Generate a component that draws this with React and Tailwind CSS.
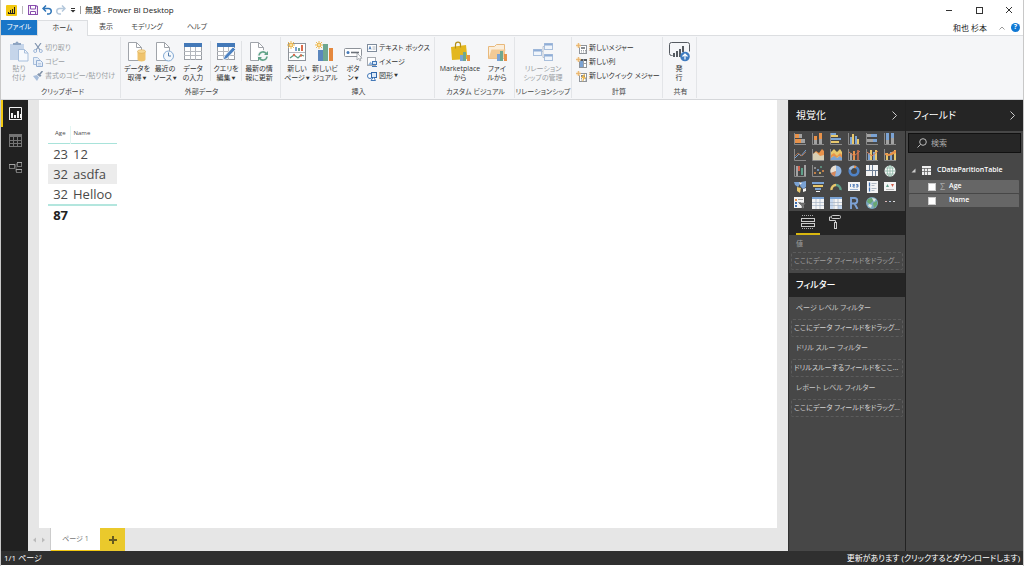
import React from "react";

const B = "#7ba3d4";
const O = "#e8924a";
const Y = "#e8c86c";
const G = "#a3a3a3";
const W = "#f4f4f4";
const D = "#3f6fb0";

function Svg({ w = 12, h = 12, className = "", children }) {
  return (
    <svg width={w} height={h} viewBox={`0 0 ${w} ${h}`} fill="none" className={`shrink-0 ${className}`} aria-hidden="true">
      {children}
    </svg>
  );
}

function Rects({ list }) {
  return list.map(([x, y, w, h, c], i) => <rect key={i} x={x} y={y} width={w} height={h} fill={c} />);
}

const Axis = () => <path d="M.5 0v11.5H12" stroke="#8a8a8a" />;

/* ---------- ribbon icons ---------- */

const Page = ({ x = 1 }) => (
  <g>
    <path d={`M${x + 0.5} 1.5h8l5 5v13h-13z`} fill="#fff" stroke="#a0a4aa" />
    <path d={`M${x + 8.5} 1.5v5h5`} stroke="#a0a4aa" />
  </g>
);

const TableShape = () => (
  <g>
    <rect x="1.5" y="3.500" width="17" height="15" fill="#fff" stroke="#9a9ea4" />
    <rect x="1" y="2" width="18" height="4" fill="#4479b8" />
    <path d="M1 10.500h18M1 14.500h18M7.500 6v13M12.500 6v13" stroke="#b4b8be" />
  </g>
);

const Spark = () => (
  <g stroke="#eeb94f">
    <path d="M4 0v8M0 4h8M1 1l6 6M7 1l-6 6" />
    <circle cx="4" cy="4" r="1.500" fill="#fff2c8" />
  </g>
);

const PasteIcon = () => (
  <Svg w={20} h={21}>
    <rect x="1" y="3" width="14" height="16" fill="#c5d5ea" />
    <path d="M4 4V2h2.500a1.500 1.500 0 0 1 3 0H12v2z" fill="#8fa5c2" />
    <path d="M9.500 8.500h6l3.500 3.500v8H9.500z" fill="#f6f9fd" stroke="#a8bfdc" />
    <path d="M15.500 8.500V12H19" stroke="#a8bfdc" />
  </Svg>
);
const GetDataIcon = () => (
  <Svg w={20} h={21}>
    <Page />
    <path d="M10.500 10.500v8c0 2.500 8 2.500 8 0v-8" fill="#efc36d" />
    <ellipse cx="14.500" cy="10.500" rx="4" ry="1.800" fill="#f6d896" stroke="#dba94c" strokeWidth=".6" />
  </Svg>
);
const RecentIcon = () => (
  <Svg w={20} h={21}>
    <Page />
    <circle cx="13.500" cy="15" r="5" fill="#f4f8fc" stroke="#84aad4" />
    <path d="M13.500 11.500V15H16" stroke="#557fae" />
  </Svg>
);
const EnterDataIcon = () => <Svg w={20} h={21}><TableShape /></Svg>;
const EditQueryIcon = () => (
  <Svg w={20} h={21}>
    <TableShape />
    <path d="M7 19l1.500-4L17 6l2.500 2.500-8.500 9z" fill="#4c82c2" stroke="#f5f6f8" strokeWidth=".8" />
  </Svg>
);
const RefreshIcon = () => (
  <Svg w={20} h={21}>
    <Page />
    <circle cx="14" cy="15" r="6" fill="#f5f6f8" />
    <path d="M10 14.500a4 4 0 0 1 7.500-1.500M18 15.500a4 4 0 0 1-7.500 1.500" stroke="#61a389" strokeWidth="1.600" />
    <path d="M19 10v4h-4zM9 20v-4h4z" fill="#61a389" />
  </Svg>
);
const NewPageIcon = () => (
  <Svg w={20} h={21}>
    <rect x="1.500" y="2.500" width="17" height="17" fill="#fff" stroke="#8d9299" />
    <Rects list={[[8, 6, 2, 4, B], [11, 7, 2, 3, "#6ba58f"], [14, 4, 2, 6, "#d96d4d"], [2, 11, 16, 1, "#b7bbc1"]]} />
    <path d="M3 17l4-3 4 3 3-3 3 1" stroke="#5a9d86" strokeWidth="1.300" />
    <circle cx="7" cy="14" r="1.200" fill="#d96d4d" />
    <circle cx="14" cy="14.500" r="1.200" fill="#d96d4d" />
    <Spark />
  </Svg>
);
const NewVisualIcon = () => (
  <Svg w={20} h={21}>
    <Rects list={[[3, 9, 5, 11, "#5b86bd"], [8, 3, 5, 17, "#6fa78f"], [14, 7, 4, 13, "#e5883e"]]} />
    <Spark />
  </Svg>
);
const ButtonIcon = () => (
  <Svg w={20} h={21}>
    <rect x="1.500" y="7.500" width="17" height="8" rx="1" fill="#fff" stroke="#8d9299" />
    <circle cx="5" cy="11.500" r="1.500" fill="#4479b8" />
    <path d="M8 11.500h8" stroke="#6c7279" strokeWidth="1.600" />
    <path d="M14 12v7l1.700-1.500 1.200 2.500 1-.5-1-2.300H19z" fill="#fff" stroke="#8d9299" strokeWidth=".7" />
  </Svg>
);
const MarketIcon = () => (
  <Svg w={20} h={21}>
    <path d="M1 6l15-2 1.500 14L2 19z" fill="#e3b71f" />
    <path d="M5.500 7.500V3.500c0-3.300 5-3.300 5 0v3" stroke="#b48f17" strokeWidth="1.200" />
    <Rects list={[[10, 14, 3, 6, B], [13, 11, 3, 9, "#6fa78f"], [17, 14, 3, 6, O]]} />
  </Svg>
);
const FolderIcon = () => (
  <Svg w={20} h={21}>
    <path d="M1.500 17.500v-12h6l2-2h8v14z" fill="#fbeedb" stroke="#e8b97c" />
    <path d="M1.500 17.500l3-9h14l-2 9z" fill="#f3ca95" />
    <Rects list={[[10, 13, 3, 7, B], [13, 10, 3, 10, "#6fa78f"], [17, 13, 3, 7, O]]} />
  </Svg>
);
const RelationIcon = () => (
  <Svg w={20} h={21}>
    <path d="M7 10.500h3v-5h3M10 10.500v6h3" stroke="#b9c3d1" />
    {[[0.5, 8.5], [11.5, 2.5], [11.5, 13.5]].map(([x, y]) => (
      <g key={y}>
        <rect x={x} y={y} width="8" height="6" fill="#f0f5fb" stroke="#a9bfdc" />
        <rect x={x} y={y} width="8" height="2" fill="#8fadd6" />
      </g>
    ))}
  </Svg>
);
const PublishIcon = () => (
  <Svg w={21} h={21}>
    <path d="M3.500 14.500h-1a2 2 0 0 1-2-2v-9a2 2 0 0 1 2-2h16a2 2 0 0 1 2 2v7" stroke="#555a60" />
    <Rects list={[[4, 12, 2, 4, "#555a60"], [7, 10, 2, 6, "#555a60"], [10, 8, 2, 8, "#555a60"], [13, 5, 2, 6, "#555a60"]]} />
    <circle cx="16" cy="15.500" r="4.800" fill="#3f7cc0" />
    <path d="M16 18.500v-5.500M13.500 15.500L16 13l2.500 2.500" stroke="#fff" strokeWidth="1.200" />
  </Svg>
);

const CutIcon = () => (
  <Svg w={10} h={10}>
    <path d="M2 0l5 7M8 0L3 7" stroke="#8195b0" strokeWidth="1.200" />
    <circle cx="2.200" cy="8" r="1.500" stroke="#9db6d8" />
    <circle cx="7.800" cy="8" r="1.500" stroke="#9db6d8" />
  </Svg>
);
const CopyIcon = () => (
  <Svg w={10} h={10}>
    <path d="M.5.5h4l2 2v5h-6z" fill="#e6eef8" stroke="#a9bfdc" />
    <path d="M3.500 3.500h4l2 2v4h-6z" fill="#e6eef8" stroke="#94aed2" />
    <path d="M5 6.500h3M5 8h3" stroke="#a9bfdc" strokeWidth=".7" />
  </Svg>
);
const BrushIcon = () => (
  <Svg w={10} h={10}>
    <path d="M0 5l4-1 2 2.500L4 10z" fill="#a7bddb" />
    <path d="M4 3.500L7 6l1.500-1.500L6 2z" fill="#8194ad" />
    <path d="M7 3l2.500-3" stroke="#7f90a6" strokeWidth="1.500" />
  </Svg>
);
const TextBoxIcon = () => (
  <Svg w={10} h={10}>
    <rect x=".5" y="1.500" width="9" height="7" fill="#fff" stroke="#7f8c9c" />
    <path d="M2 6.500l1-3 1 3M2.300 5.500h1.500" stroke="#3f75b5" strokeWidth=".8" />
    <path d="M5.500 4h3M5.500 6h3" stroke="#9aa1a9" strokeWidth=".8" />
  </Svg>
);
const ImageIcon = () => (
  <Svg w={10} h={10}>
    <rect x=".5" y=".5" width="8" height="8" fill="#fff" stroke="#a6aab0" />
    <path d="M1 8l2.500-3.500L6 8z" fill="#8fb2da" />
    <rect x="5.500" y="4.500" width="4" height="3" fill="#dce9f7" stroke="#4479b8" />
    <path d="M5 9.500h5" stroke="#4479b8" />
  </Svg>
);
const ShapesIcon = () => (
  <Svg w={10} h={10}>
    <circle cx="3" cy="5" r="2.500" stroke="#4479b8" fill="#fff" />
    <rect x="4.500" y="1.500" width="5" height="5" stroke="#2f67ab" fill="#dce9f7" />
    <path d="M4 9.500h4.500L6.500 6z" stroke="#4479b8" fill="#fff" />
  </Svg>
);
const CalcIcon = ({ kind }) => (
  <Svg w={11} h={11}>
    <rect x="3.500" y="2.500" width="7" height="8" fill="#fff" stroke="#8f949a" />
    {kind === "column" ? (
      <g>
        <rect x="3" y="2" width="8" height="2" fill="#55595f" />
        <path d="M7.500 2v8M4 6.500h6" stroke="#9a9fa5" />
        <rect x="4" y="4" width="3" height="6" fill="#7ba3d4" />
      </g>
    ) : (
      <g>
        <rect x="5" y="4" width="4" height="2" fill="#888d93" />
        <path d="M5 7.500h5M5 9h5" stroke="#a0a4aa" strokeDasharray="1 1" />
      </g>
    )}
    {kind === "quick" && <path d="M8 3L5 7h2l-1 4 4-5H8l1-3z" fill="#eeb94f" />}
    <circle cx="2.500" cy="2.500" r="2.300" fill="#f5d9ae" />
    <path d="M2.500 0v5M0 2.500h5" stroke="#e8b36a" strokeWidth=".8" />
  </Svg>
);

/* ---------- ribbon pieces ---------- */

const Caret = () => <span className="ml-px text-[4px] align-middle text-[#333]">▼</span>;

function BigButton({ icon, lines, caret, width = "w-7", muted }) {
  return (
    <button type="button" className={`flex shrink-0 flex-col items-center ${width} ${muted ? "text-[#9a9ea3]" : "text-[#333]"}`}>
      {icon}
      <span className="mt-[2px] flex flex-col items-center text-[7px] leading-[9px] whitespace-nowrap">
        <span>{lines[0]}</span>
        <span>{lines[1]}{caret && <Caret />}</span>
      </span>
    </button>
  );
}

function SmallButton({ icon, label, caret, muted }) {
  return (
    <button type="button" className={`flex h-[14px] items-center gap-[2px] text-[7px] whitespace-nowrap ${muted ? "text-[#9a9ea3]" : "text-[#333]"}`}>
      {icon}
      <span>{label}{caret && <Caret />}</span>
    </button>
  );
}

function Group({ label, width, children }) {
  return (
    <section className={`flex shrink-0 flex-col border-r border-[#e3e5e8] ${width}`}>
      <div className="flex h-[50px] items-start pt-1">{children}</div>
      <h2 className="text-center text-[7px] leading-[10px] whitespace-nowrap text-[#444]">{label}</h2>
    </section>
  );
}

const Sep = () => <span className="mx-[3px] h-10 w-px shrink-0 bg-[#e0e2e5]" />;

function Ribbon() {
  return (
    <div className="flex h-16 overflow-hidden border-b border-[#d5d7da] bg-[#f5f6f8] py-px">
      <Group label="クリップボード" width="w-[120px] pl-1">
        <BigButton icon={<PasteIcon />} lines={["貼り", "付け"]} muted />
        <div className="flex flex-col">
          <SmallButton icon={<CutIcon />} label="切り取り" muted />
          <SmallButton icon={<CopyIcon />} label="コピー" muted />
          <SmallButton icon={<BrushIcon />} label="書式のコピー/貼り付け" muted />
        </div>
      </Group>
      <Group label="外部データ" width="w-[160px] pl-[2px]">
        <BigButton icon={<GetDataIcon />} lines={["データを", "取得"]} caret />
        <BigButton icon={<RecentIcon />} lines={["最近の", "ソース"]} caret />
        <BigButton icon={<EnterDataIcon />} lines={["データ", "の入力"]} />
        <Sep />
        <BigButton icon={<EditQueryIcon />} lines={["クエリを", "編集"]} caret width="w-6" />
        <Sep />
        <BigButton icon={<RefreshIcon />} lines={["最新の情", "報に更新"]} />
      </Group>
      <Group label="挿入" width="w-[154px] pl-[2px]">
        <BigButton icon={<NewPageIcon />} lines={["新しい", "ページ"]} caret />
        <BigButton icon={<NewVisualIcon />} lines={["新しいビ", "ジュアル"]} />
        <BigButton icon={<ButtonIcon />} lines={["ボタ", "ン"]} caret />
        <div className="flex flex-col">
          <SmallButton icon={<TextBoxIcon />} label="テキスト ボックス" />
          <SmallButton icon={<ImageIcon />} label="イメージ" />
          <SmallButton icon={<ShapesIcon />} label="図形" caret />
        </div>
      </Group>
      <Group label="カスタム ビジュアル" width="w-[80px] pl-[2px]">
        <BigButton icon={<MarketIcon />} lines={["Marketplace", "から"]} width="w-[46px]" />
        <BigButton icon={<FolderIcon />} lines={["ファイ", "ルから"]} />
      </Group>
      <Group label="リレーションシップ" width="w-[57px]">
        <BigButton icon={<RelationIcon />} lines={["リレーション", "シップの管理"]} width="w-[56px]" muted />
      </Group>
      <Group label="計算" width="w-[91px] pl-[4px]">
        <div className="flex flex-col">
          <SmallButton icon={<CalcIcon />} label="新しいメジャー" />
          <SmallButton icon={<CalcIcon kind="column" />} label="新しい列" />
          <SmallButton icon={<CalcIcon kind="quick" />} label="新しいクイック メジャー" />
        </div>
      </Group>
      <Group label="共有" width="w-[34px] pl-[2px]">
        <BigButton icon={<PublishIcon />} lines={["発", "行"]} />
      </Group>
    </div>
  );
}

/* ---------- title bar ---------- */

function TitleBar() {
  return (
    <header className="flex h-5 items-center bg-white pr-[10px] pl-[5px] text-[8px] text-[#222]">
      <Svg w={11} h={11}>
        <rect width="11" height="11" rx="1" fill="#f2c811" />
        <Rects list={[[2, 7, 1, 2, "#222"], [4, 5, 1, 4, "#222"], [6, 4, 1, 5, "#222"], [8, 2, 1, 7, "#222"], [2, 8, 7, 1, "#222"]]} />
      </Svg>
      <span className="mx-[5px] h-2 w-px bg-[#bbb]" />
      <button type="button" aria-label="上書き保存">
        <Svg w={10} h={10}>
          <path d="M.5.500h7l2 1v8h-9z" stroke="#8a4fae" strokeWidth="1.200" fill="#fff" />
          <path d="M2.500 1v3h5V1M2.500 9.500v-3h5v3" stroke="#8a4fae" />
        </Svg>
      </button>
      <button type="button" aria-label="元に戻す" className="ml-[4px]">
        <Svg w={10} h={10}>
          <path d="M1 3.500h5.500a2.500 2.500 0 0 1 0 5.500H5M4 .5l-3 3 3 3" stroke="#2f75b8" strokeWidth="1.500" />
        </Svg>
      </button>
      <button type="button" aria-label="やり直し" className="ml-[4px]">
        <Svg w={10} h={10}>
          <path d="M9 3.500H3.500a2.500 2.500 0 0 0 0 5.500H5M6 .5l3 3-3 3" stroke="#b4c8dc" strokeWidth="1.500" />
        </Svg>
      </button>
      <button type="button" aria-label="カスタマイズ" className="ml-[4px]">
        <Svg w={6} h={6}><path d="M1 1.500h4" stroke="#333" /><path d="M.5 3h5L3 5.500z" fill="#333" /></Svg>
      </button>
      <span className="mx-[4px] h-2 w-px bg-[#999]" />
      <h1 className="whitespace-nowrap">無題 - Power BI Desktop</h1>
      <div className="ml-auto flex items-center gap-[22px]">
        <button type="button" aria-label="最小化"><Svg w={8} h={8}><path d="M1 4.500h6" stroke="#333" /></Svg></button>
        <button type="button" aria-label="最大化"><Svg w={8} h={8}><rect x="1.500" y="1.500" width="6" height="6" stroke="#333" /></Svg></button>
        <button type="button" aria-label="閉じる"><Svg w={8} h={8}><path d="M1 1l6 6M7 1L1 7" stroke="#333" /></Svg></button>
      </div>
    </header>
  );
}

function MenuTabs() {
  return (
    <nav className="flex h-4 items-stretch border-b border-[#dcdee1] bg-white text-[7px] text-[#444]">
      <button type="button" className="w-9 bg-[#1976c8] text-white">ファイル</button>
      <button type="button" className="-mb-px w-[51px] border-x border-t border-[#dcdee1] bg-[#f5f6f8] text-[#333]">ホーム</button>
      <button type="button" className="w-[36px]">表示</button>
      <button type="button" className="w-[46px]">モデリング</button>
      <button type="button" className="w-[54px]">ヘルプ</button>
      <div className="ml-auto flex items-center gap-[12px] pr-[3px] text-[8px]">
        <span className="text-[#222]">和也 杉本</span>
        <div className="flex items-center gap-[6px]">
          <button type="button" aria-label="リボンを折りたたむ"><Svg w={6} h={6}><path d="M.5 4.500L3 2l2.500 2.500" stroke="#999" /></Svg></button>
          <button type="button" aria-label="ヘルプを表示" className="flex h-[9px] w-[9px] items-center justify-center rounded-full bg-[#0f78d4] text-[7px] font-bold text-white">?</button>
        </div>
      </div>
    </nav>
  );
}

/* ---------- canvas ---------- */

function Rail() {
  return (
    <nav className="flex w-[27px] shrink-0 flex-col bg-[#212121]">
      <button type="button" aria-label="レポート" className="flex h-[27px] items-center justify-center border-l-2 border-[#f2c811]">
        <Svg w={13} h={13}>
          <path d="M.5 12V.5h12V12M0 12.500h13" stroke="#f2f2f2" />
          <Rects list={[[2, 6, 2, 5, W], [5, 8, 2, 3, W], [8, 4, 2, 7, W], [11, 7, 1, 4, W]]} />
        </Svg>
      </button>
      <button type="button" aria-label="データ" className="flex h-[27px] items-center justify-center border-l-2 border-transparent">
        <Svg w={13} h={13}>
          <rect x=".5" y=".5" width="12" height="12" stroke="#757575" />
          <rect width="13" height="3" fill="#757575" />
          <path d="M0 6.500h13M0 9.500h13M4.500 3v10M8.500 3v10" stroke="#757575" />
        </Svg>
      </button>
      <button type="button" aria-label="リレーションシップ" className="flex h-[27px] items-center justify-center border-l-2 border-transparent">
        <Svg w={13} h={13}>
          <path d="M5.500 5h1.500v5.500h1M7 5V3h1.500" stroke="#757575" />
          <rect x=".5" y="3.500" width="5" height="4" stroke="#757575" />
          <rect x="8.500" y="1.500" width="4" height="4" stroke="#757575" />
          <rect x="7.500" y="8.500" width="5" height="3" stroke="#757575" />
          <path d="M0 3.500h6M8 1.500h5M7 8.500h6" stroke="#a5a5a5" />
        </Svg>
      </button>
    </nav>
  );
}

const rows = [
  { age: 23, name: "12" },
  { age: 32, name: "asdfa", shaded: true },
  { age: 32, name: "Helloo" },
];

function DataTable() {
  return (
    <table className="w-[69px] border-collapse text-[13px] leading-[20px] text-[#4a4a4a]">
      <thead>
        <tr className="h-[17px] border-b border-[#a8e3da] text-[6px] leading-[8px]">
          <th className="w-[22px] border-r border-[#e3f6f3] pt-px pr-1 pb-[4px] text-right font-normal">Age</th>
          <th className="pt-px pb-[4px] pl-[3px] text-left font-normal">Name</th>
        </tr>
      </thead>
      <tbody>
        <tr aria-hidden="true" className="h-px" />
        {rows.map((r, i) => (
          <tr key={i} className={`h-5 ${r.shaded ? "bg-[#ececec]" : ""}`}>
            <td className="p-0 pr-[2px] text-right">{r.age}</td>
            <td className="p-0 pl-[3px]">{r.name}</td>
          </tr>
        ))}
      </tbody>
      <tfoot>
        <tr className="border-t-2 border-[#b3e6de] leading-[18px] text-[#222]">
          <td className="p-0 pr-[2px] text-right font-bold">87</td>
          <td />
        </tr>
      </tfoot>
    </table>
  );
}

function Canvas() {
  return (
    <main className="flex min-w-0 flex-1 flex-col bg-[#e6e6e6]">
      <div className="mr-[11px] ml-[11px] flex-1 bg-white pt-[26px] pl-[9px]">
        <DataTable />
      </div>
      <div className="flex h-[23px] items-stretch text-[8px]">
        <div className="flex w-[23px] items-center justify-center gap-1 border-r border-[#ccc]">
          <button type="button" aria-label="前のページ"><Svg w={5} h={6}><path d="M4 .5v5L1 3z" fill="#bbb" /></Svg></button>
          <button type="button" aria-label="次のページ"><Svg w={5} h={6}><path d="M1 .5v5L4 3z" fill="#bbb" /></Svg></button>
        </div>
        <button type="button" className="w-[49px] border-b border-[#f2c811] bg-white text-[7px] text-[#777]">ページ 1</button>
        <button type="button" aria-label="ページの追加" className="flex w-[25px] items-center justify-center bg-[#eac92c]">
          <Svg w={8} h={8}><path d="M4 0v8M0 4h8" stroke="#665a20" strokeWidth="2" /></Svg>
        </button>
      </div>
    </main>
  );
}

/* ---------- visual gallery ---------- */

const visuals = [
  ["積み上げ横棒", <g key="i"><Axis /><Rects list={[[1, 1, 4, 4, O], [5, 1, 3, 4, G], [1, 6, 6, 4, O], [7, 6, 4, 4, G]]} /></g>],
  ["積み上げ縦棒", <g key="i"><Axis /><Rects list={[[2, 3, 3, 4, O], [2, 7, 3, 4, G], [7, 0, 3, 6, O], [7, 6, 3, 5, G]]} /></g>],
  ["集合横棒", <g key="i"><Axis /><Rects list={[[1, 0, 5, 2, B], [1, 2, 7, 2, Y], [1, 5, 10, 2, B], [1, 8, 8, 2, Y]]} /></g>],
  ["集合縦棒", <g key="i"><Axis /><Rects list={[[2, 4, 2, 7, B], [4, 1, 2, 10, Y], [7, 3, 2, 8, B], [9, 6, 2, 5, Y]]} /></g>],
  ["100% 積み上げ横棒", <g key="i"><Axis /><Rects list={[[1, 1, 4, 3, G], [5, 1, 6, 3, B], [1, 6, 6, 3, G], [7, 6, 4, 3, B]]} /></g>],
  ["100% 積み上げ縦棒", <g key="i"><Axis /><Rects list={[[2, 0, 3, 7, B], [2, 7, 3, 4, G], [7, 0, 3, 5, B], [7, 5, 3, 6, G]]} /></g>],
  ["折れ線", <g key="i"><Axis /><path d="M1 9l4-4 2 2 5-6" stroke={B} /><path d="M1 7l3-3 4 3 4-4" stroke="#a5714f" /></g>],
  ["面", <g key="i"><Axis /><path d="M1 11V5l3-3 3 2 3-4 2 2v9z" fill={O} /><path d="M1 11V5l3-2 4 4 4-1v5z" fill="#d8cfb4" /></g>],
  ["積み上げ面", <g key="i"><Axis /><path d="M1 11V3l3-3 3 3 3-3 2 3v8z" fill={Y} /><path d="M1 6l3-2 3 3 3-3 2 2v3l-3-2-3 2-3-2-2 2z" fill={O} /><path d="M1 11V9l3-2 3 2 3-2 2 2v2z" fill={B} /></g>],
  ["折れ線と積み上げ縦棒", <g key="i"><Axis /><Rects list={[[2, 4, 2, 7, G], [5, 2, 2, 9, O], [9, 1, 2, 10, "#b3684b"]]} /><path d="M1 3l5 4 6-5" stroke="#d97a4f" /></g>],
  ["折れ線と集合縦棒", <g key="i"><Axis /><Rects list={[[2, 4, 2, 7, B], [4, 1, 2, 10, Y], [7, 3, 2, 8, B], [9, 1, 2, 10, Y]]} /><path d="M1 3l5 4 6-5" stroke="#d97a4f" /></g>],
  ["リボン", <g key="i"><Axis /><Rects list={[[2, 4, 2, 7, Y], [6, 3, 2, 8, B], [10, 1, 2, 10, Y]]} /><path d="M1 4l4 1 3-2 4-2v3L8 6 5 7 1 6z" fill={O} /></g>],
  ["ウォーターフォール", <g key="i"><Axis /><Rects list={[[2, 1, 2, 10, G], [4, 1, 2, 5, "#cf5f4b"], [7, 3, 2, 7, "#5fa08a"], [10, 0, 2, 11, G]]} /></g>],
  ["散布図", <g key="i"><Axis /><circle cx="3" cy="8" r="1" fill={O} /><circle cx="6" cy="5" r="1" fill={B} /><circle cx="9" cy="2" r="1" fill="#5fa08a" /><circle cx="8" cy="8" r="1" fill={Y} /><circle cx="3" cy="3" r="1" fill={G} /><circle cx="11" cy="6" r="1" fill={O} /></g>],
  ["円", <g key="i"><circle cx="6" cy="6" r="5.500" fill="#8fb3de" /><path d="M6 6V.5A5.500 5.500 0 0 0 .8 8z" fill="#eadfd0" /><path d="M6 6L.8 8A5.500 5.500 0 0 0 5 11.400z" fill="#d88758" /></g>],
  ["ドーナツ", <g key="i"><circle cx="6" cy="6" r="4.300" stroke="#4f83c8" strokeWidth="2.600" /><path d="M2 4.500A4.300 4.300 0 0 1 6 1.700" stroke="#a9bfd9" strokeWidth="2.600" /><path d="M6 1.700A4.300 4.300 0 0 1 8 2.200" stroke={O} strokeWidth="2.600" /></g>],
  ["ツリーマップ", <g key="i"><rect width="12" height="11" fill={W} /><path d="M6.500 0v11M0 5.500h12M9.500 5v6M3.500 0v5" stroke="#6d7f95" /></g>],
  ["マップ", <g key="i"><circle cx="6" cy="6" r="5.500" fill="#f4f8f6" /><path d="M6 .5v11M.5 6h11M2 3h8M2 9h8" stroke="#7faf9c" strokeWidth=".7" /><ellipse cx="6" cy="6" rx="2.800" ry="5.500" stroke="#7faf9c" strokeWidth=".7" /></g>],
  ["塗り分け地図", <g key="i"><path d="M0 1h5l1 2-2 3-3-2zM7 1l5-1v6l-3 2-3-3z" fill={B} /><path d="M3 6l4 1-1 5-3-2z" fill={Y} /><path d="M9 8l3-1v3l-3 1zM5 1l3 1-2 2z" fill={W} /></g>],
  ["じょうご", <g key="i"><Rects list={[[0, 1, 12, 2, B], [1, 4, 10, 2, Y], [3, 7, 6, 2, B], [4, 10, 4, 1, W]]} /></g>],
  ["ゲージ", <g key="i"><path d="M1.500 9a4.500 4.500 0 0 1 4.500-5" stroke={Y} strokeWidth="2.400" /><path d="M6 4a4.500 4.500 0 0 1 4.500 5" stroke="#5fa08a" strokeWidth="2.400" /></g>],
  ["カード", <g key="i"><rect y="1" width="12" height="9" fill={W} /><path d="M2.500 3v3M4.500 3.500h2v1h-1.500v1.500h2M8 3.500h2v2.500H8M8.500 4.700H10" stroke={D} strokeWidth=".8" /><path d="M2 8.500h8" stroke="#9bb4d6" /></g>],
  ["複数の行カード", <g key="i"><rect x="1" width="11" height="12" fill={W} /><path d="M3.500 1.500v4M3.500 6.500v4" stroke={D} strokeWidth="1.300" /><path d="M5.500 2.500h5M5.500 4.500h3M5.500 7.500h5M5.500 9.500h3" stroke="#b1bac5" /></g>],
  ["KPI", <g key="i"><rect y="1" width="12" height="9" fill={W} /><path d="M2 6l1.500-3L5 6z" fill="#5fa08a" /><path d="M7 3h3L8.500 6z" fill="#cf5f4b" /><path d="M2 8.500h8" stroke="#bbb" /></g>],
  ["スライサー", <g key="i"><rect width="10" height="11" fill={W} /><Rects list={[[1, 2, 2, 2, O], [1, 5, 2, 2, D], [1, 8, 2, 2, D], [4, 2, 5, 1, G], [4, 5, 3, 1, G]]} /><path d="M5 6h7L9.500 9v3L8 11V9z" fill="#777" stroke="#474747" strokeWidth=".5" /></g>],
  ["テーブル", <g key="i"><rect width="12" height="12" fill={W} /><rect width="12" height="2" fill={B} /><path d="M0 5.500h12M0 8.500h12M4 2v10M8 2v10" stroke="#a4b2c4" strokeWidth=".7" /></g>],
  ["マトリックス", <g key="i"><rect width="12" height="12" fill={W} /><rect width="12" height="2" fill={B} /><rect y="2" width="3" height="10" fill="#c6d8ef" /><rect x="8" y="8" width="4" height="4" fill="#c6d8ef" /><path d="M0 5.500h12M0 8.500h12M4 2v10M8 2v10" stroke="#a4b2c4" strokeWidth=".7" /></g>],
  ["R スクリプト", <g key="i"><path d="M3 12V1h3.500a2.700 2.700 0 0 1 0 5.500H3M6.500 6.500L9.500 12" stroke="#7ea3d6" strokeWidth="1.900" /></g>],
  ["ArcGIS マップ", <g key="i"><circle cx="6" cy="6" r="6" fill="#7ba8bf" /><path d="M2 2l4-1 1 3-3 3-3-2zM7 6l4-2v4l-3 3z" fill="#69a872" /><path d="M6 1l4 1-2 3zM3 7l3 1-1 3-3-2z" fill="#dfe5dc" /></g>],
  ["その他", <g key="i"><Rects list={[[1, 4, 2, 1, "#dcb9b9"], [5, 4, 2, 1, "#b9cce6"], [9, 4, 2, 1, "#ddd"]]} /></g>],
];

function Chevron() {
  return <Svg w={7} h={9}><path d="M1.500.5l4 4-4 4" stroke="#ccc" /></Svg>;
}

function PanelHeader({ children }) {
  return (
    <div className="flex h-[31px] items-center justify-between bg-[#252525] px-[7px] text-white">
      <h2 className="text-[10px]">{children}</h2>
      <button type="button" aria-label={`${children}を折りたたむ`}><Chevron /></button>
    </div>
  );
}

function DropZone({ children, dim }) {
  return (
    <div className={`mx-[2px] flex h-[18px] items-center rounded-[2px] border border-dashed border-[#5c5c5c] pl-[2px] text-[7px] whitespace-nowrap ${dim ? "text-[#a0a0a0]" : "text-[#d5d5d5]"}`}>
      {children}
    </div>
  );
}

const filters = [
  ["ページ レベル フィルター", "ここにデータ フィールドをドラッグ..."],
  ["ドリル スルー フィルター", "ドリルスルーするフィールドをここ..."],
  ["レポート レベル フィルター", "ここにデータ フィールドをドラッグ..."],
];

function VisualPanel() {
  return (
    <aside className="flex w-[117px] shrink-0 flex-col border-l border-[#333] bg-[#474747]">
      <PanelHeader>視覚化</PanelHeader>
      <div className="grid grid-cols-6 pr-[6px] pl-[2px]">
        {visuals.map(([name, art]) => (
          <button key={name} type="button" aria-label={name} className="flex h-4 items-center justify-center">
            <Svg>{art}</Svg>
          </button>
        ))}
      </div>
      <div className="flex h-6 gap-[3px] bg-[#252525] pl-[7px]">
        <button type="button" aria-label="フィールド" className="flex w-6 items-center justify-center border-b-2 border-[#d9b70f]">
          <Svg w={14} h={14}>
            <path d="M1 .5h12M1 13.500h12" stroke="#aaa" strokeDasharray="1 1" />
            <rect x=".5" y="3.500" width="13" height="3" stroke="#ccc" />
            <rect x=".5" y="8.500" width="13" height="3" stroke="#ccc" />
          </Svg>
        </button>
        <button type="button" aria-label="書式" className="flex w-6 items-center justify-center border-b-2 border-transparent">
          <Svg w={13} h={14}>
            <rect x="2.500" y=".5" width="9" height="3" rx="1" stroke="#ccc" />
            <path d="M2.500 2H.5v3.500h6V8" stroke="#ccc" />
            <rect x="5.500" y="7.500" width="2" height="6" stroke="#ccc" />
          </Svg>
        </button>
      </div>
      <h3 className="px-[7px] pt-[3px] text-[7px] leading-[12px] text-[#a0a0a0]">値</h3>
      <div className="pt-[2px]"><DropZone dim>ここにデータ フィールドをドラッグ...</DropZone></div>
      <h2 className="mt-[3px] flex h-6 items-center bg-[#252525] px-[7px] text-[9px] font-medium text-white">フィルター</h2>
      {filters.map(([title, zone], i) => (
        <section key={i}>
          <h3 className="flex h-[22px] items-center px-[7px] text-[7px] text-[#c8c8c8]">{title}</h3>
          <DropZone>{zone}</DropZone>
        </section>
      ))}
    </aside>
  );
}

function FieldRow({ name, sigma }) {
  return (
    <label className="flex h-[14px] items-center rounded-[1px] border-b border-[#474747] bg-[#666] pl-[19px] text-[7px] font-semibold text-white">
      <input type="checkbox" className="h-[8px] w-[8px] appearance-none border border-[#ccc] bg-white" />
      <span className="w-[13px] text-center text-[9px] font-normal text-[#aaa]">{sigma ? "Σ" : ""}</span>
      {name}
    </label>
  );
}

function FieldsPanel() {
  return (
    <aside className="flex w-[118px] shrink-0 flex-col border-l border-[#222] bg-[#474747]">
      <PanelHeader>フィールド</PanelHeader>
      <label className="mx-[2px] mt-[2px] flex h-5 items-center gap-1 border border-[#111] bg-[#262626] px-2">
        <Svg w={10} h={10}><circle cx="6" cy="4" r="3.300" stroke="#bbb" /><path d="M3.500 6.500L.5 9.500" stroke="#bbb" /></Svg>
        <input type="text" aria-label="検索" placeholder="検索" className="w-full min-w-0 bg-transparent text-[8px] text-white outline-none placeholder:text-[#aaa]" />
      </label>
      <div className="mt-[9px] flex h-4 items-center pl-[5px] text-[7px] font-semibold whitespace-nowrap text-white">
        <Svg w={5} h={5}><path d="M4.500.5v4h-4z" fill="#ccc" /></Svg>
        <Svg w={9} h={9} className="mx-[6px]">
          <rect width="9" height="9" fill="#eee" />
          <path d="M0 2.500h9M0 5.500h9M2.500 2v7M5.500 2v7" stroke="#666" strokeWidth=".8" />
        </Svg>
        CDataParitionTable
      </div>
      <div className="mt-[2px] mr-[4px] ml-[3px] flex flex-col">
        <FieldRow name="Age" sigma />
        <FieldRow name="Name" />
      </div>
    </aside>
  );
}

export default function App() {
  return (
    <div className="flex min-h-screen flex-col border-x border-[#c8c8c8] bg-white font-['Open_Sans','Noto_Sans_CJK_JP',sans-serif] [font-feature-settings:'palt']">
      <TitleBar />
      <MenuTabs />
      <Ribbon />
      <div className="flex flex-1">
        <Rail />
        <Canvas />
        <VisualPanel />
        <FieldsPanel />
      </div>
      <footer className="mb-px flex h-[14px] items-center justify-between bg-[#2f2f2f] px-[3px] text-[8px] text-white">
        <span>1/1 ページ</span>
        <button type="button">更新があります (クリックするとダウンロードします)</button>
      </footer>
    </div>
  );
}
